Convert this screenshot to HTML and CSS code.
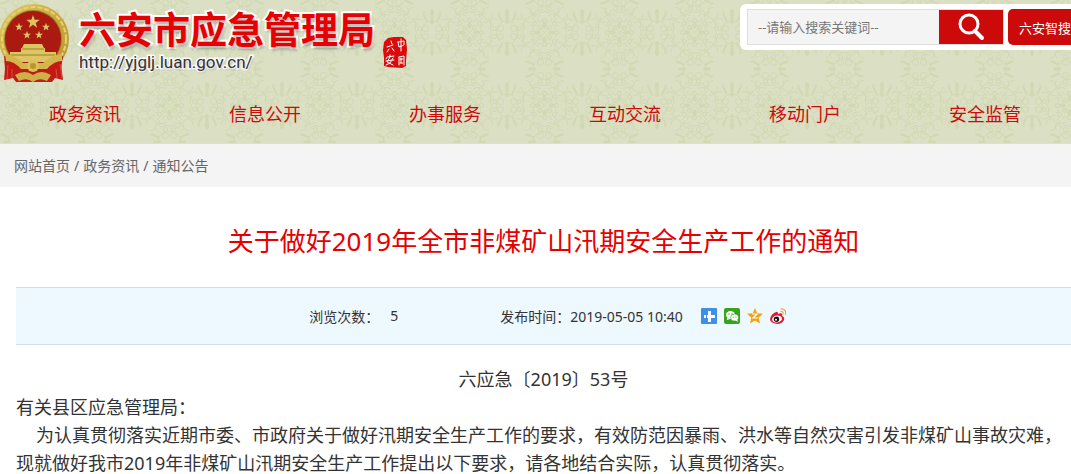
FILE: index.html
```
<!DOCTYPE html>
<html lang="zh-CN">
<head>
  <meta charset="UTF-8" />
  <meta name="viewport" content="width=device-width, initial-scale=1.0"/>
  <title>关于做好2019年全市非煤矿山汛期安全生产工作的通知</title>
  <link rel="stylesheet" href="styles.css">
</head>
<body>
  <header class="header">
    <!-- damask background -->
    <svg class="header-bg" aria-hidden="true">
      <defs>
        <g id="quarter" fill="none" stroke="#d1d8b3" stroke-width="1">
          <!-- centre flower -->
          <ellipse cx="0" cy="-7" rx="2" ry="3" fill="#d1d8b3" stroke="none"/>
          <ellipse cx="7" cy="0" rx="3" ry="2" fill="#d1d8b3" stroke="none"/>
          <circle cx="5" cy="-5" r="2"/>
          <circle cx="0" cy="-12" r="2"/>
          <circle cx="12" cy="0" r="2"/>
          <circle cx="10" cy="-9" r="2"/>
          <path d="M0 0L6 -6M3 -11q4 1 4 -3M11 -3q-1 -4 3 -4M9 -11l4 -4M14 -10q5 1 5 -4q5 0 4 -5M10 -15q-1 -5 4 -5q0 -5 5 -5"/>
          <path d="M4 -17q4 -3 8 0q4 -4 1 -8M19 -4q4 -3 1 -8q5 -3 8 -1"/>
          <path d="M7 -23L23 -8"/>
          <!-- knot above: petals lie to the left and right -->
          <circle cx="4" cy="-30" r="3"/>
          <circle cx="4" cy="-24" r="2"/>
          <path d="M0 -26q9 -1 11 -7q1 -3 -2 -3M0 -21q5 3 9 -2"/>
          <path d="M9 -36h7" stroke-width="2"/>
          <path d="M17 -37q4 -3 7 0z" fill="#d1d8b3"/>
          <path d="M11 -32l6 3" stroke-width="2" stroke-linecap="round"/>
          <circle cx="18" cy="-29" r="1"/>
          <!-- knot on the side: petals stand up and down -->
          <circle cx="31" cy="-4" r="3"/>
          <circle cx="25" cy="-4" r="2"/>
          <path d="M27 0q1 -9 7 -11q3 -1 3 2M22 0q-3 -5 2 -9"/>
          <path d="M37 -9v-8" stroke-width="2"/>
          <path d="M38 -24q-4 3 -1 8z" fill="#d1d8b3"/>
          <path d="M32 -12l-3 -6" stroke-width="2" stroke-linecap="round"/>
          <circle cx="29" cy="-20" r="1"/>
        </g>
        <pattern id="damask" width="75" height="73" patternUnits="userSpaceOnUse" x="-18" y="-4">
          <g transform="translate(37.5 36.5)">
            <use href="#quarter"/>
            <use href="#quarter" transform="scale(-1 1)"/>
            <use href="#quarter" transform="scale(1 -1)"/>
            <use href="#quarter" transform="scale(-1 -1)"/>
          </g>
        </pattern>
      </defs>
      <rect width="100%" height="100%" fill="url(#damask)"/>
    </svg>

    <div class="header-top">
      <div class="brand">
        <svg class="emblem" viewBox="0 0 70 80" aria-hidden="true">
          <defs>
            <linearGradient id="gold" x1="0" y1="0" x2="1" y2="1">
              <stop offset="0" stop-color="#e0cb62"/>
              <stop offset="0.5" stop-color="#cbaa3c"/>
              <stop offset="1" stop-color="#b8942b"/>
            </linearGradient>
            <polygon id="star" points="0,-7 1.7,-2.2 6.7,-2.2 2.7,0.9 4.1,5.7 0,2.8 -4.1,5.7 -2.7,0.9 -6.7,-2.2 -1.7,-2.2"/>
          </defs>
          <path d="M6 54L4 76l9 -2 3 4h36l3 -4 8 2 -3 -24z" fill="#c41a14"/>
          <circle cx="34" cy="35" r="35" fill="url(#gold)"/>
          <circle cx="34" cy="35" r="32" fill="none" stroke="#e3d27a" stroke-width="2" stroke-dasharray="5 2"/>
          <circle cx="33" cy="35" r="29" fill="#9c7c26"/>
          <circle cx="33" cy="35" r="28" fill="#ab1a10"/>
          <g fill="#dcc664">
            <use href="#star" transform="translate(33 18)"/>
            <use href="#star" transform="translate(19 23) scale(.6)"/>
            <use href="#star" transform="translate(46 23) scale(.6)"/>
            <use href="#star" transform="translate(27 31) scale(.6)"/>
            <use href="#star" transform="translate(39 31) scale(.6)"/>
            <path d="M24 40h18l2 4H22zM21 44h24v5H21zM10 48h46v5H10zM14 53h38l-4 5H18z"/>
          </g>
          <path d="M22 45h22M11 51h44" stroke="#a17c20" fill="none"/>
          <path d="M4 52q10 1 18 10q11 7 22 0q8 -9 19 -10l-2 13q-8 -1 -14 7q-14 5 -28 0q-6 -8 -14 -7z" fill="#c41a14"/>
          <path d="M5 50q10 1 18 9h20q8 -8 19 -9v7q-8 0 -15 8H21q-7 -8 -15 -8z" fill="#d3b74c"/>
          <path d="M15 71q10 -6 18 0q8 -6 18 0l-4 6q-8 -4 -14 1q-6 -5 -14 -1z" fill="#ceb048"/>
          <circle cx="33" cy="62" r="6" fill="#d9c15b"/>
          <circle cx="33" cy="62" r="3" fill="#b8962f"/>
          <path d="M8 61l-1 14M12 65v9M56 65l1 9M60 60l2 14" stroke="#e0483a" fill="none"/>
        </svg>
        <div class="brand-text">
          <div class="site-name">六安市应急管理局</div>
          <div class="site-url">http://yjglj.luan.gov.cn/</div>
        </div>
        <svg class="seal" viewBox="0 0 24 31" role="img" aria-label="中国六安">
          <path d="M5 1l6 -1 9 0 3 3 1 9 -1 12 0 5 -4 2 -14 -1 -4 -1 0 -8 -1 -8 1 -8z" fill="#dc0a0a"/>
          <g fill="none" stroke="#fff" stroke-linecap="round">
            <path d="M8 4l1 3M4 10l6 -2M6 12l-2 3M9 11l2 3"/>
            <path d="M15 5l1 5 5 -2 0 -4 -6 1M18 2l0 12"/>
            <path d="M7 18v1M3 22l1 -2 7 -1M7 20l-3 5 6 3M10 21l-3 5 -4 2M3 24l8 -1"/>
            <path d="M16 20l0 8M16 20l5 -1 0 9M17 22h3M18 21v5M17 26h3"/>
          </g>
        </svg>
      </div>

      <form class="search">
        <div class="search-field">
          <input type="text" class="search-input" aria-label="搜索关键词" placeholder="--请输入搜索关键词--" />
          <button type="submit" class="search-button" aria-label="搜索">
            <svg width="28" height="28" viewBox="0 0 28 28" fill="none" stroke="#fff">
              <circle cx="12" cy="11" r="9" stroke-width="3"/>
              <path d="M18 18l7 7" stroke-width="4" stroke-linecap="round"/>
            </svg>
          </button>
        </div>
        <button type="button" class="smart-button">六安智搜</button>
      </form>
    </div>

    <nav class="nav">
      <a href="#">政务资讯</a>
      <a href="#">信息公开</a>
      <a href="#">办事服务</a>
      <a href="#">互动交流</a>
      <a href="#">移动门户</a>
      <a href="#">安全监管</a>
    </nav>
  </header>

  <div class="breadcrumb">
    <a href="#">网站首页</a><span>/</span><a href="#">政务资讯</a><span>/</span><a href="#">通知公告</a>
  </div>

  <main class="article">
    <h1>关于做好2019年全市非煤矿山汛期安全生产工作的通知</h1>

    <div class="meta">
      <div class="views"><span>浏览次数：</span><span>5</span></div>
      <div class="published">发布时间：2019-05-05 10:40</div>
      <div class="share">
        <a href="#" aria-label="分享">
          <svg viewBox="0 0 16 16">
            <rect width="16" height="16" rx="1" fill="#3f8fe8"/>
            <path d="M7 3h3v4h4v3h-4v4H7v-4H6V7h1zM3 7h2v3H3z" fill="#fff"/>
          </svg>
        </a>
        <a href="#" aria-label="微信">
          <svg viewBox="0 0 16 16">
            <rect width="16" height="16" rx="2" fill="#36a41d"/>
            <path d="M3 10l0 2 3 -1z" fill="#fff"/>
            <ellipse cx="6.500" cy="7" rx="4.500" ry="4" fill="#fff"/>
            <ellipse cx="10.500" cy="9.500" rx="4" ry="3.500" fill="#fff" stroke="#36a41d" stroke-width=".6"/>
            <path d="M11 12l3 2 -1 -3z" fill="#fff"/>
            <g fill="#36a41d">
              <circle cx="5" cy="6" r=".7"/><circle cx="8" cy="6" r=".7"/>
              <circle cx="9.300" cy="9" r=".6"/><circle cx="12" cy="9" r=".6"/>
            </g>
          </svg>
        </a>
        <a href="#" aria-label="QQ空间">
          <svg viewBox="0 0 16 16">
            <path d="M8 0l2.200 5.200 5.800 .5 -4.300 3.900 1.300 5.900L8 12.500l-5 3 1.300 -5.900L0 5.700l5.800 -.5z" fill="#f5a00f"/>
            <path d="M5 6h5l-4 4h5" fill="none" stroke="#fff" stroke-width="1.200"/>
          </svg>
        </a>
        <a href="#" aria-label="新浪微博">
          <svg viewBox="0 0 16 16">
            <path d="M6 4q2 -1 2 2q5 -2 4 2q3 1 2 4q-2 4 -7 4q-7 -1 -7 -5q1 -5 6 -7z" fill="#e6162d"/>
            <ellipse cx="7" cy="11" rx="5" ry="3.500" fill="#fff" transform="rotate(-10 7 11)"/>
            <circle cx="6.500" cy="11.300" r="2.700" fill="#111"/>
            <circle cx="6" cy="11.800" r="1" fill="#fff"/>
            <path d="M10.500 3.500q3 -.5 2.500 3M10.500 1q6 -.5 5 6" fill="none" stroke="#f5a33b" stroke-width="1.200"/>
          </svg>
        </a>
      </div>
    </div>

    <div class="content">
      <p class="doc-number">六应急〔2019〕53号</p>
      <p>有关县区应急管理局：</p>
      <p class="indent">为认真贯彻落实近期市委、市政府关于做好汛期安全生产工作的要求，有效防范因暴雨、洪水等自然灾害引发非煤矿山事故灾难，现就做好我市2019年非煤矿山汛期安全生产工作提出以下要求，请各地结合实际，认真贯彻落实。</p>
    </div>
  </main>
</body>
</html>
```
FILE: styles.css
```
* {
  box-sizing: border-box;
}

body {
  margin: 0;
  font-family: "Noto Sans", "Noto Sans CJK SC", sans-serif;
  font-size: 14px;
  color: #333;
  background: #fff;
  overflow-x: hidden;
}

a {
  color: inherit;
  text-decoration: none;
}

.header {
  position: relative;
  background: #dbdfc3;
  border-bottom: 1px solid #ddd;
  overflow: hidden;
}

.header-bg {
  position: absolute;
  top: 0;
  left: 0;
  width: 100%;
  height: 100%;
}

.header-top {
  position: relative;
  display: flex;
  justify-content: space-between;
  align-items: flex-start;
  min-width: 1089px;
  padding-top: 4px;
}

.brand {
  display: flex;
  align-items: flex-start;
}

.emblem {
  width: 70px;
  height: 80px;
}

.brand-text {
  margin-left: 9px;
  padding-top: 5px;
}

.site-name {
  font-size: 37px;
  line-height: 42px;
  font-weight: bold;
  color: #e60000;
  -webkit-text-stroke: 4px #fff;
  paint-order: stroke fill;
  text-shadow: 1px 3px 3px rgba(0,0,0,0.3);
}

.site-url {
  font-family: Roboto, "Liberation Sans", sans-serif;
  font-size: 17px;
  line-height: 22px;
  color: #333;
  -webkit-text-stroke: 3px #fff;
  paint-order: stroke fill;
  text-shadow: 1px 2px 2px rgba(0,0,0,0.2);
}

.seal {
  width: 24px;
  height: 31px;
  margin: 33px 0 0 8px;
}

.search {
  display: flex;
  gap: 4px;
  padding: 5px 7px;
  background: #fff;
  border-radius: 6px;
}

.search-field {
  display: flex;
  width: 257px;
  height: 36px;
  border: 1px solid #ddd;
  background: #f4f4f4;
}

.search-input {
  flex: 1;
  min-width: 0;
  padding: 0 10px;
  border: none;
  background: none;
  font-family: inherit;
  font-size: 13px;
}

.search-input::placeholder {
  color: #777;
}

.search-button {
  width: 64px;
  padding: 0;
  border: none;
  background: #cd0a0a;
  cursor: pointer;
}

.search-button svg {
  display: block;
  margin: auto;
}

.smart-button {
  padding: 0 11px;
  border: none;
  border-radius: 5px;
  background: #cd0a0a;
  color: #fff;
  font-family: inherit;
  font-size: 13px;
  white-space: nowrap;
  cursor: pointer;
}

.nav {
  position: relative;
  display: flex;
  min-width: 1125px;
  padding: 14px 0 13px 45px;
}

.nav a {
  width: 180px;
  padding-left: 3px;
  border-left: 1px solid #d8dad0;
  font-size: 18px;
  line-height: 32px;
  color: #cd0a0a;
}

.breadcrumb {
  padding: 0 14px;
  background: #f4f4f4;
  line-height: 43px;
  color: #666;
}

.breadcrumb span {
  margin: 0 4px;
}

.article {
  padding-left: 16px;
}

h1 {
  margin: 0;
  padding: 34px 0 26px;
  font-size: 26px;
  line-height: 40px;
  font-weight: normal;
  text-align: center;
  color: #e60000;
}

.meta {
  display: flex;
  justify-content: center;
  align-items: center;
  height: 58px;
  padding-left: 8px;
  background: #edf8ff;
  border-top: 1px solid #cde0ea;
  border-bottom: 1px solid #cde0ea;
}

.views {
  display: flex;
  gap: 11px;
  margin-right: 102px;
}

.share {
  display: flex;
  gap: 7px;
  margin-left: 18px;
}

.share svg {
  display: block;
  width: 16px;
  height: 16px;
}

.content {
  padding-top: 20px;
  font-size: 18px;
  line-height: 28px;
}

.content p {
  margin: 0;
}

.content .doc-number {
  text-align: center;
}

.content .indent {
  text-indent: 20px;
}
```
